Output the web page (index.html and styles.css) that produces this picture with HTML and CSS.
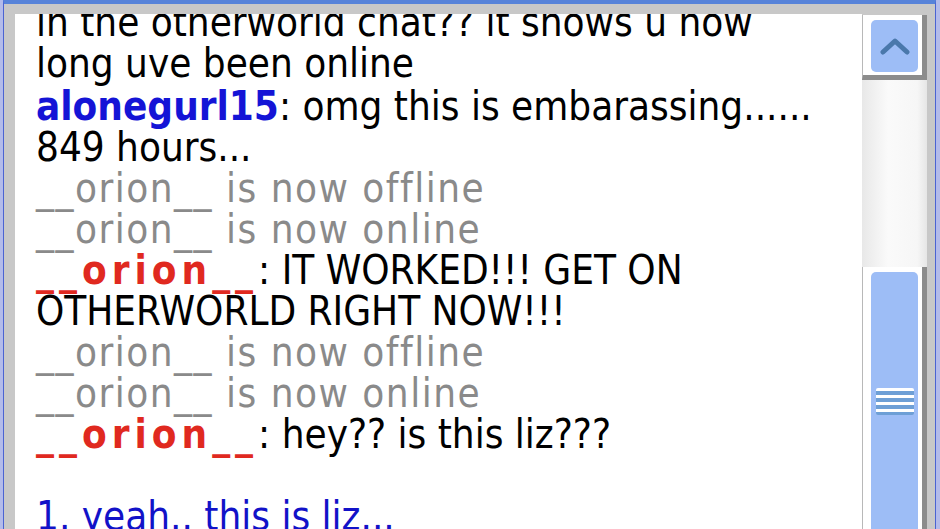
FILE: index.html
```html
<!DOCTYPE html>
<html lang="en">
<head>
    <meta charset="UTF-8">
    <meta name="viewport" content="width=device-width, initial-scale=1.0">
    <title>Otherworld Chat</title>
    <link rel="stylesheet" href="styles.css">
</head>
<body>
    <div class="window">
        <div class="log">
            <div class="log-inner">
                <p class="line">in the otherworld chat?? it shows u how long uve been online</p>
                <p class="line"><span class="nick nick-blue">alonegurl15</span>: omg this is embarassing...... 849 hours...</p>
                <p class="line status">__orion__ is now offline</p>
                <p class="line status">__orion__ is now online</p>
                <p class="line"><span class="nick nick-red">__orion__</span>: IT WORKED!!! GET ON OTHERWORLD RIGHT NOW!!!</p>
                <p class="line status">__orion__ is now offline</p>
                <p class="line status">__orion__ is now online</p>
                <p class="line"><span class="nick nick-red">__orion__</span>: hey?? is this liz???</p>
                <div class="choices">
                    <p class="choice">1. yeah.. this is liz...</p>
                </div>
            </div>
        </div>

        <div class="scrollbar">
            <div class="sb-btn">
                <div class="sb-face">
                    <svg class="chevron" width="30" height="18" viewBox="0 0 30 18">
                        <polyline points="3,15 15,4 27,15" fill="none" stroke="#4a78ab" stroke-width="5" stroke-linecap="round" stroke-linejoin="round"/>
                    </svg>
                </div>
            </div>
            <div class="sb-gap"></div>
            <div class="sb-thumb">
                <div class="sb-face">
                    <div class="grip"></div>
                </div>
            </div>
        </div>
    </div>
</body>
</html>
```

FILE: styles.css
```css
html, body {
    margin: 0;
    height: 100%;
    overflow: hidden;
}
body {
    background-color: #b3bbea;
}
.window {
    display: flex;
    height: 620px;
    margin: 0 4px 0 3px;
    border-top: 4px solid #5783d9;
    border-left: 1px solid #4b63d2;
    border-right: 1px solid #4b63d2;
    background-color: #c8c8c8;
    padding: 10px 8px 0 11px;
}
.log {
    flex: 1;
    background-color: #fff;
    overflow: hidden;
}
.log-inner {
    margin-top: -12px;
    padding: 0 22px 0 21px;
    font-family: "DejaVu Sans Condensed", "DejaVu Sans", sans-serif;
    font-stretch: condensed;
    font-size: 40px;
    line-height: 41px;
    color: #000;
}
.line {
    margin: 0;
}
.line:nth-child(2) {
    margin-top: 2px;
}
.status {
    color: #8a8a8a;
    letter-spacing: 1.5px;
}
.nick {
    font-weight: bold;
}
.nick-blue {
    color: #1414d6;
}
.nick-red {
    color: #e0291f;
    letter-spacing: 5px;
}
.choices {
    margin-top: 41px;
}
.choice {
    margin: 0;
    color: #1212c8;
}
.scrollbar {
    width: 65px;
    margin-top: 1px;
    display: flex;
    flex-direction: column;
    background: linear-gradient(to right, #e8e8e8, #fafafa 40%, #f6f6f6 85%, #e6e6e6);
}
.sb-btn, .sb-thumb {
    box-sizing: border-box;
    background-color: #fff;
    border-left: 1px solid #b8b8b8;
    border-right: 5px solid #8c8c8c;
    border-bottom: 5px solid #8c8c8c;
    padding: 5px 4px 3px 8px;
}
.sb-btn {
    height: 65px;
}
.sb-gap {
    height: 187px;
}
.sb-thumb {
    height: 300px;
}
.sb-face {
    height: 100%;
    border-radius: 5px;
    background-color: #9dbdf6;
    display: flex;
    justify-content: center;
    align-items: center;
}
.sb-thumb .sb-face {
    align-items: flex-start;
}
.chevron {
    display: block;
}
.grip {
    margin-top: 116px;
    width: 38px;
    height: 27px;
    border-radius: 2px;
    background: repeating-linear-gradient(to bottom, #ffffff 0 3px, #6d9fd6 3px 7px);
}
```
